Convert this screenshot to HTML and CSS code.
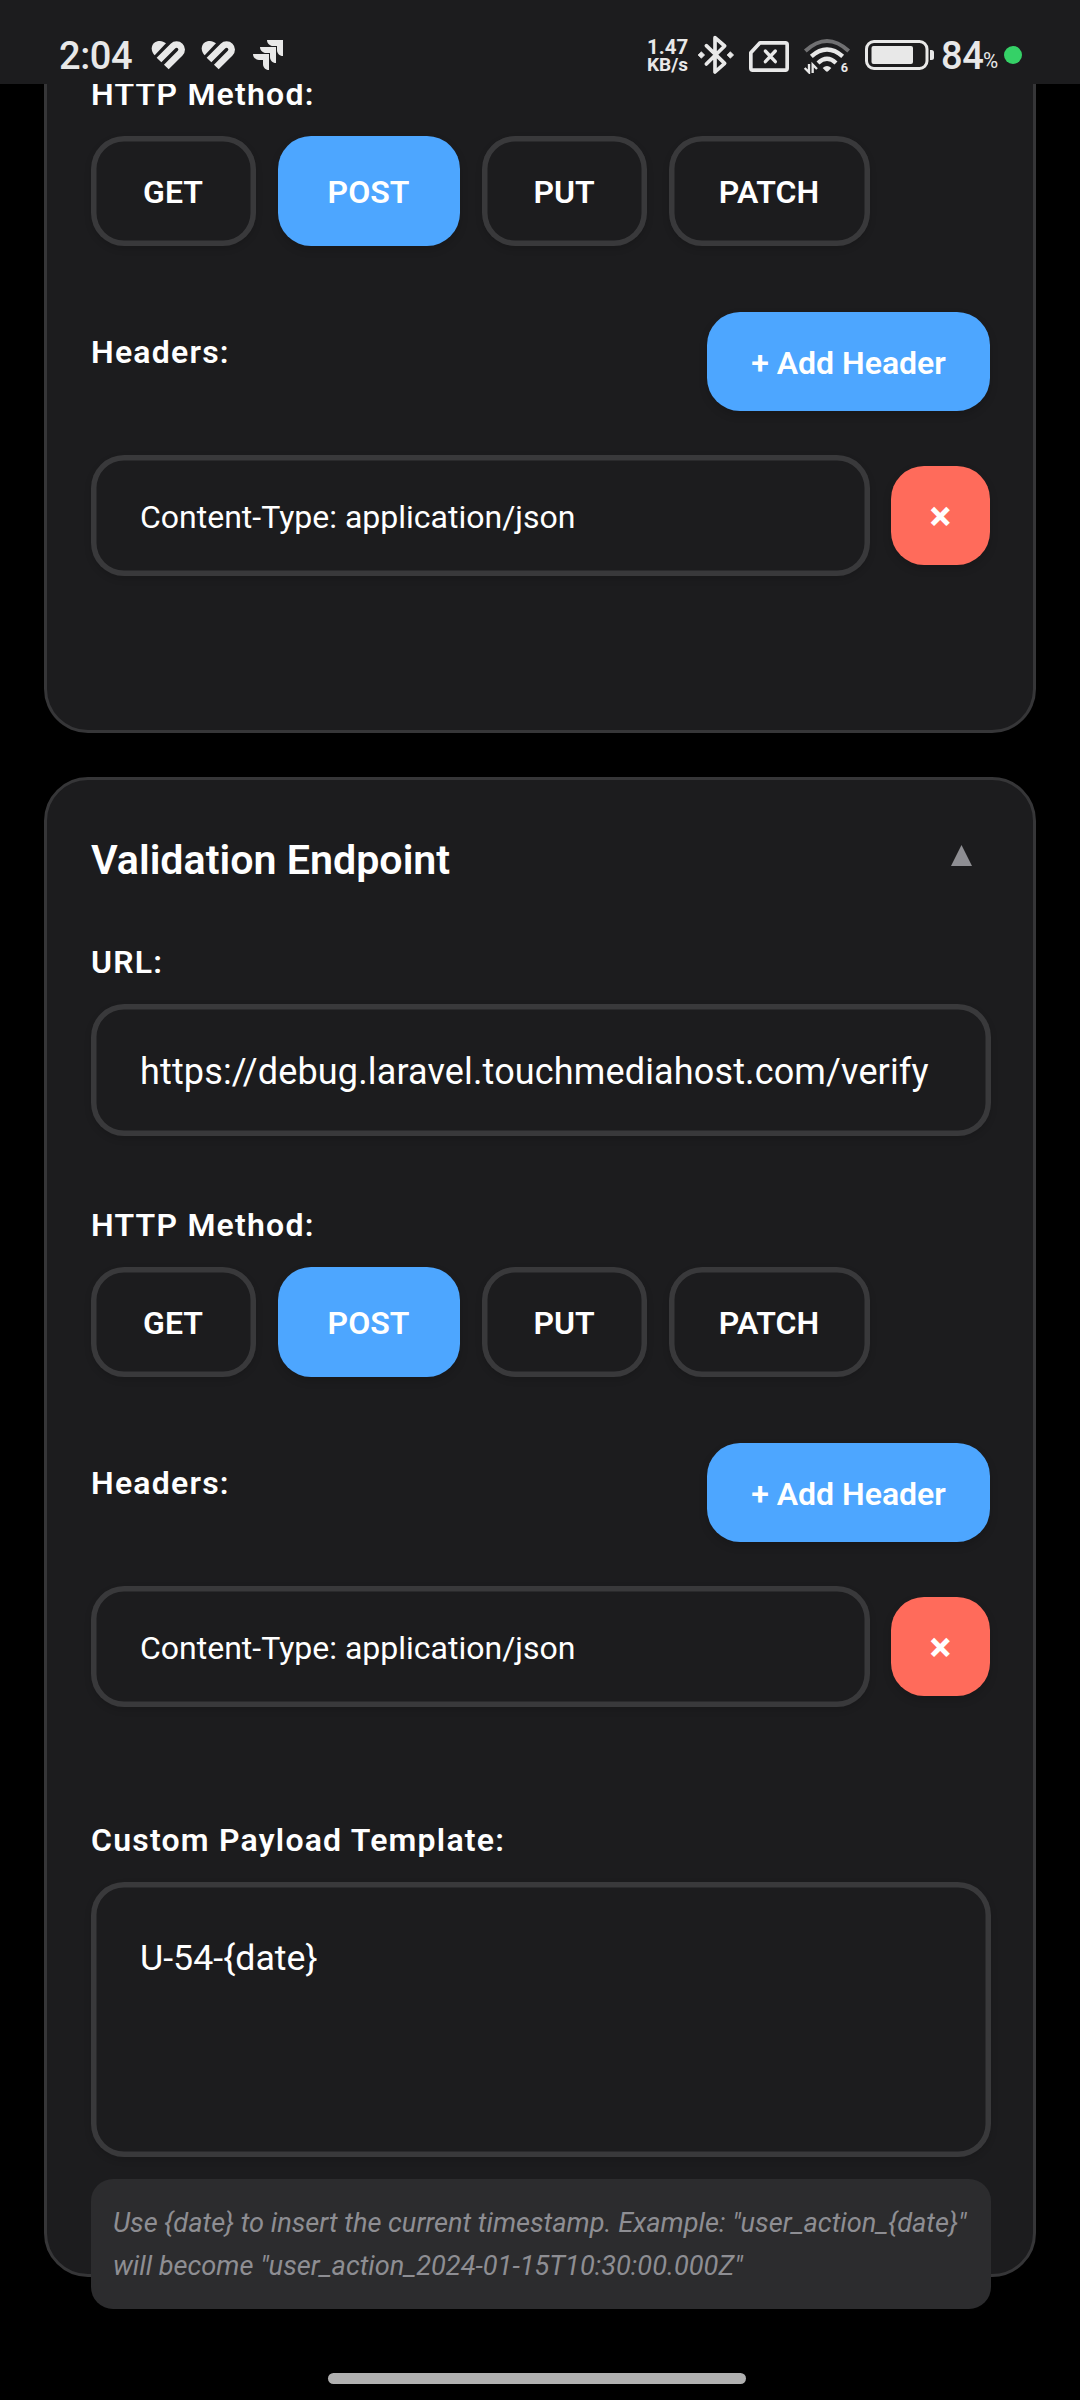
FILE: index.html
```html
<!DOCTYPE html>
<html lang="en">
<head>
<meta charset="utf-8">
<title>Endpoint Settings</title>
<link rel="stylesheet" href="styles.css">
</head>
<body>
<div class="app">
  <header class="status-bar">
    <div class="status-left">
      <span class="clock">2:04</span>
      <svg class="icon-heart" viewBox="33 30 104 90"><path d="M44 76C32 63 32 46 45 37C56 30 69 32 78 40Z" fill="currentColor"/><path d="M57 90L99 48A15.2 15.2 0 0 1 120.500 69.500L79 111" fill="none" stroke="currentColor" stroke-width="20"/></svg>
      <svg class="icon-heart" viewBox="33 30 104 90"><path d="M44 76C32 63 32 46 45 37C56 30 69 32 78 40Z" fill="currentColor"/><path d="M57 90L99 48A15.2 15.2 0 0 1 120.500 69.500L79 111" fill="none" stroke="currentColor" stroke-width="20"/></svg>
      <svg class="icon-arrows" viewBox="339 30 90 90" fill="currentColor"><path d="M381 30H429V78C418 78 411 70 411 60V48H399C390 48 381 41 381 30Z"/><path d="M360 51H408V99C397 99 390 91 390 81V69H378C369 69 360 62 360 51Z"/><path d="M339 72H387V120C376 120 369 112 369 102V90H357C348 90 339 83 339 72Z"/></svg>
    </div>
    <div class="status-right">
      <div class="net-speed"><span class="net-value">1.47</span><span class="net-unit">KB/s</span></div>
      <svg class="icon-bluetooth" viewBox="174 12 108 126"><path d="M199 47L254 100L225 126V23L254 48L199 102" fill="none" stroke="currentColor" stroke-width="11" stroke-linecap="round" stroke-linejoin="round"/><path d="M174 75L184 65L194 75L184 85ZM261 75L271 65L281 75L271 85Z" fill="currentColor" stroke="currentColor" stroke-width="2" stroke-linejoin="round"/></svg>
      <svg class="icon-sim" viewBox="327 33 120 93"><path d="M360 38.500H436Q441.500 38.500 441.500 44V115Q441.500 120.500 436 120.500H338Q332.500 120.500 332.500 115V68Z" fill="none" stroke="currentColor" stroke-width="11" stroke-linejoin="round"/><path d="M376 63L406 95M406 63L376 95" stroke="currentColor" stroke-width="10" stroke-linecap="round"/></svg>
      <svg class="icon-wifi" viewBox="489 24 144 108"><path d="M496 63Q561 3 626 63" fill="none" stroke="#707072" stroke-width="12"/><path d="M514 79Q561 38 608 79" fill="none" stroke="currentColor" stroke-width="13"/><path d="M534 99Q561 74 588 99" fill="none" stroke="currentColor" stroke-width="13"/><path d="M548 114Q561 102 574 114L565 123Q561 127 557 123Z" fill="currentColor"/><path d="M507 102V127L494 114M518 129V104L531 117" fill="none" stroke="currentColor" stroke-width="7"/><text x="602" y="127" class="wifi-generation">6</text></svg>
      <svg class="icon-battery" viewBox="0 0 69 30"><rect x="1.500" y="1.500" width="60.500" height="27" rx="7.500" fill="none" stroke="currentColor" stroke-width="3"/><rect x="6.500" y="6" width="41.500" height="18" rx="2" fill="currentColor"/><path d="M65 10h1.500q2.500 0 2.500 2.500v5q0 2.500-2.500 2.500H65Z" fill="currentColor"/></svg>
      <span class="battery-level">84</span><span class="battery-percent">%</span>
      <span class="privacy-dot"></span>
    </div>
  </header>

  <main class="content">
    <section class="card card-clipped">
      <div class="label">HTTP Method:</div>
      <div class="methods">
        <button class="method get">GET</button>
        <button class="method post selected">POST</button>
        <button class="method put">PUT</button>
        <button class="method patch">PATCH</button>
      </div>
      <div class="headers-row">
        <div class="label">Headers:</div>
        <button class="add-button">+ Add Header</button>
      </div>
      <div class="header-item">
        <div class="field header-field">Content-Type: application/json</div>
        <button class="remove-button">×</button>
      </div>
    </section>

    <section class="card card-validation">
      <div class="card-title">
        <h2>Validation Endpoint</h2>
        <svg class="chevron" viewBox="0 0 21 21"><path d="M10.500 0L21 21H0Z" fill="#8e8e93"/></svg>
      </div>
      <div class="label">URL:</div>
      <div class="field url-field">https://debug.laravel.touchmediahost.com/verify</div>
      <div class="label">HTTP Method:</div>
      <div class="methods">
        <button class="method get">GET</button>
        <button class="method post selected">POST</button>
        <button class="method put">PUT</button>
        <button class="method patch">PATCH</button>
      </div>
      <div class="headers-row">
        <div class="label">Headers:</div>
        <button class="add-button">+ Add Header</button>
      </div>
      <div class="header-item">
        <div class="field header-field">Content-Type: application/json</div>
        <button class="remove-button">×</button>
      </div>
      <div class="label payload-label">Custom Payload Template:</div>
      <div class="field payload-field">U-54-{date}</div>
      <p class="hint">Use {date} to insert the current timestamp. Example: "user_action_{date}"<br>will become "user_action_2024-01-15T10:30:00.000Z"</p>
    </section>
  </main>
  <div class="nav-pill"></div>
</div>
</body>
</html>
```
FILE: styles.css
```css
* { box-sizing: border-box; }

body {
  margin: 0;
  background: #000;
  color: #fff;
  font-family: Roboto, "Noto Sans", sans-serif;
}

button {
  border: 0;
  padding: 0;
  color: #fff;
  font-family: inherit;
}

.app {
  position: relative;
  display: flex;
  flex-direction: column;
  width: 1080px;
  height: 2400px;
  overflow: hidden;
}

/* Status bar */
.status-bar {
  display: flex;
  justify-content: space-between;
  height: 84px;
  flex: none;
  padding: 26px 58px 0 59px;
  background: #1c1c1e;
  color: #e8e8e8;
}

.status-left,
.status-right {
  display: flex;
  align-items: center;
  height: 58px;
}

.clock {
  width: 92px;
  padding-top: 2px;
  font-size: 38px;
  font-weight: 500;
  line-height: 58px;
  letter-spacing: -0.4px;
}

.icon-heart { width: 34.67px; height: 30px; margin-right: 15.3px; }
.icon-arrows { width: 30px; height: 30px; margin-left: 2px; }

.net-speed {
  display: flex;
  flex-direction: column;
  width: 51px;
  padding-top: 2px;
  font-weight: 700;
  line-height: 18px;
}
.net-value { font-size: 20.5px; }
.net-unit { font-size: 19px; }

.icon-bluetooth { width: 36px; height: 42px; }
.icon-sim { width: 40px; height: 31px; margin: 3px 14px 0 15px; }
.icon-wifi { width: 48px; height: 36px; margin-top: 2px; }
.wifi-generation { font-size: 38px; font-weight: 700; fill: #e8e8e8; }
.icon-battery { width: 69px; height: 30px; margin: 0 7px 0 14px; }
.battery-level { width: 42px; padding-top: 2px; font-size: 38px; font-weight: 500; line-height: 58px; letter-spacing: -0.4px; }
.battery-percent { width: 21px; font-size: 22px; line-height: 58px; padding-top: 12px; transform: scaleX(0.94); transform-origin: left; }
.privacy-dot { width: 18px; height: 18px; border-radius: 50%; background: #35d167; }

/* Cards */
.content {
  display: flex;
  flex: 1;
  flex-direction: column;
  gap: 44px;
  min-height: 0;
  padding: 0 44px;
  overflow: hidden;
}

.card {
  flex: none;
  padding: 44px 43px 0 44px;
  border: 3px solid #363638;
  border-radius: 44px;
  background: #1c1c1e;
}

.card-clipped {
  height: 649px;
  padding-top: 0;
  border-top: 0;
  border-radius: 0 0 44px 44px;
}
.card-clipped > .label:first-child { margin-top: -12px; }

.card-validation { height: 1500px; }

.card-title {
  display: flex;
  align-items: center;
  justify-content: space-between;
  height: 72px;
  margin-bottom: 44px;
  padding-right: 18px;
}
.card-title h2 { margin: 0; font-size: 41.2px; font-weight: 600; line-height: 54px; }
.chevron { width: 21px; height: 21px; margin-top: -10px; }

.label {
  height: 44px;
  margin-bottom: 20px;
  font-size: 32px;
  font-weight: 600;
  line-height: 44px;
  letter-spacing: 1.22px;
}

/* Fields */
.field {
  border-radius: 33px;
  box-shadow: inset 0 0 0 5.5px #39393b, 0 3px 7px rgba(0, 0, 0, 0.14);
  white-space: nowrap;
}
.url-field {
  width: 900px;
  height: 132px;
  margin-bottom: 67px;
  padding-left: 49px;
  font-size: 36px;
  line-height: 136px;
  letter-spacing: 0.14px;
}
.header-field {
  width: 779px;
  height: 121px;
  padding-left: 49px;
  font-size: 32px;
  line-height: 124px;
}
.payload-label { margin-top: 111px; }
.payload-field {
  width: 900px;
  height: 275px;
  padding: 54px 49px;
  font-size: 35.75px;
  line-height: 45px;
}

.methods { display: flex; gap: 22px; margin-bottom: 66px; }
.method {
  height: 110px;
  padding-right: 1px;
  border-radius: 33px;
  background: #1c1c1e;
  box-shadow: inset 0 0 0 5.5px #39393b, 0 3px 7px rgba(0, 0, 0, 0.14);
  font-size: 32px;
  font-weight: 600;
  line-height: 112px;
}
.get, .put { width: 165px; }
.post { width: 182px; }
.patch { width: 201px; }
.selected { background: #4da6ff; box-shadow: 0 4px 8px rgba(0, 0, 0, 0.16); }

.headers-row {
  display: flex;
  align-items: flex-start;
  justify-content: space-between;
  height: 99px;
  margin-bottom: 44px;
}
.headers-row .label { margin-top: 18px; }
.add-button {
  width: 283px;
  height: 99px;
  border-radius: 33px;
  background: #4da6ff;
  box-shadow: 0 4px 8px rgba(0, 0, 0, 0.16);
  font-size: 32px;
  font-weight: 600;
  line-height: 103px;
}

.header-item { display: flex; align-items: center; justify-content: space-between; }
.remove-button {
  width: 99px;
  height: 99px;
  padding-top: 2px;
  border-radius: 33px;
  background: #ff6b5b;
  box-shadow: 0 4px 8px rgba(0, 0, 0, 0.16);
  font-size: 41px;
  font-weight: 700;
  line-height: 97px;
}

.hint {
  width: 900px;
  height: 130px;
  margin: 22px 0 0;
  padding: 23px 22px 21px;
  border-radius: 22px;
  background: #2c2c2e;
  color: #8e8e93;
  font-size: 27.2px;
  font-style: italic;
  line-height: 43px;
  white-space: nowrap;
}

/* Gesture handle floating over the page */
.nav-pill {
  position: absolute;
  bottom: 16px;
  left: 328px;
  width: 418px;
  height: 11px;
  border-radius: 6px;
  background: #b0b0b0;
}
```
